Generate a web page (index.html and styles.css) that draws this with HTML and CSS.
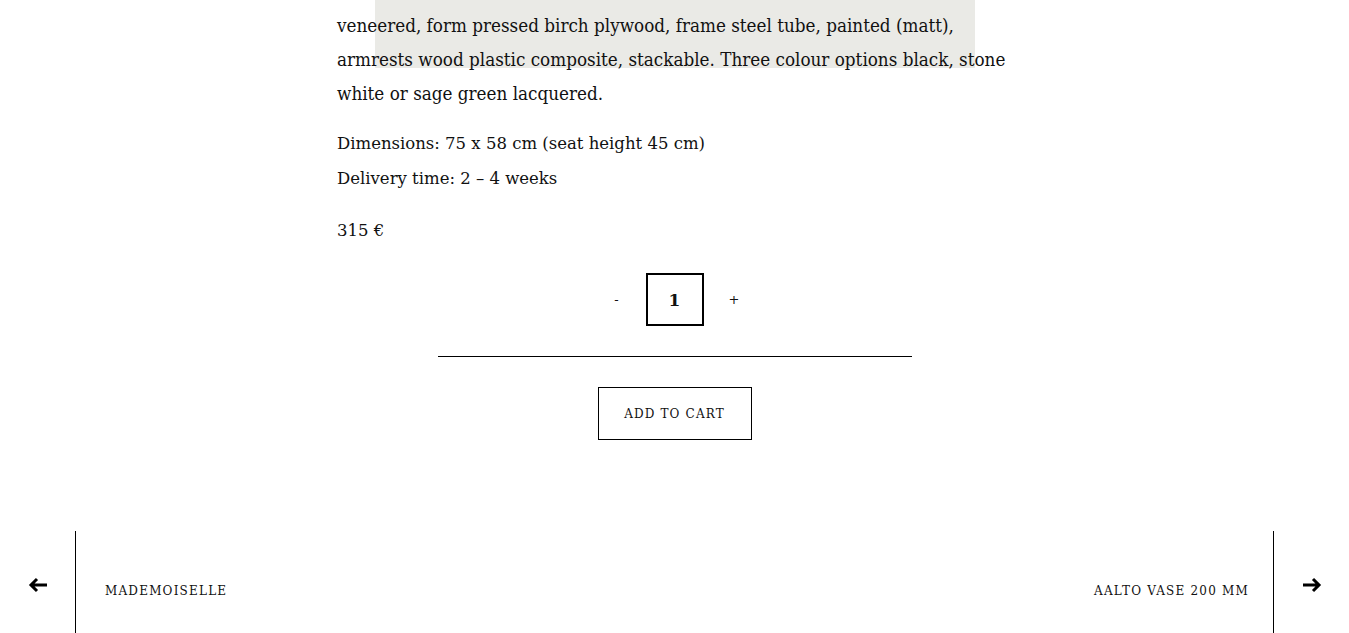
FILE: index.html
```html
<!DOCTYPE html>
<html lang="en">
<head>
<meta charset="utf-8">
<title>Product</title>
<link rel="stylesheet" href="styles.css">
</head>
<body>
<main class="product">
  <div class="media-edge"></div>
  <div class="description">
    <p class="lead">veneered, form pressed birch plywood, frame steel tube, painted (matt), armrests wood plastic composite, stackable. Three colour options black, stone white or sage green lacquered.</p>
    <p class="meta">Dimensions: 75 x 58 cm (seat height 45 cm)<br>Delivery time: 2 – 4 weeks</p>
    <p class="price">315 €</p>
  </div>
  <form class="cart">
    <div class="qty">
      <button type="button" class="qty-btn">-</button>
      <span class="qty-val">1</span>
      <button type="button" class="qty-btn">+</button>
    </div>
    <hr class="rule">
    <button type="button" class="add">ADD TO CART</button>
  </form>
</main>
<nav class="pager">
  <a class="pager-arrow" href="#" aria-label="Previous">
    <svg width="20" height="16" viewBox="0 0 20 16"><path d="M19 8H3M9 2L3 8l6 6" fill="none" stroke="#000" stroke-width="3"/></svg>
  </a>
  <a class="pager-link prev" href="#">MADEMOISELLE</a>
  <a class="pager-link next" href="#">AALTO VASE 200 MM</a>
  <a class="pager-arrow" href="#" aria-label="Next">
    <svg width="20" height="16" viewBox="0 0 20 16"><path d="M1 8h16M11 2l6 6-6 6" fill="none" stroke="#000" stroke-width="3"/></svg>
  </a>
</nav>
</body>
</html>
```

FILE: styles.css
```css
html, body {
  margin: 0;
  padding: 0;
  background: #fff;
  color: #111;
  font-family: "DejaVu Serif", "Liberation Serif", serif;
}
.product {
  position: relative;
  width: 675px;
  margin: 0 auto;
}
.media-edge {
  position: absolute;
  left: 38px;
  top: 0;
  width: 600px;
  height: 68px;
  background: #eaeae6;
  z-index: 0;
}
.description {
  position: relative;
  z-index: 1;
}
.lead {
  margin: 0;
  padding-top: 9px;
  font-stretch: condensed;
  line-height: 34px;
  font-size: 18.7px;
}
.meta {
  margin: 15px 0 0;
  line-height: 35px;
  font-size: 16.5px;
}
.price {
  margin: 23px 0 0;
  font-size: 16.5px;
  line-height: 24px;
}
.cart {
  display: flex;
  flex-direction: column;
  align-items: center;
}
.qty {
  display: flex;
  align-items: center;
  gap: 25px;
  margin-top: 30px;
}
.qty-btn {
  border: 0;
  background: none;
  font-family: inherit;
  font-size: 13px;
  color: #111;
  padding: 0;
  width: 8px;
}
.qty-val {
  box-sizing: border-box;
  width: 58px;
  height: 53px;
  border: 2px solid #000;
  display: flex;
  align-items: center;
  justify-content: center;
  font-weight: bold;
  font-size: 17px;
}
.rule {
  width: 474px;
  border: 0;
  border-top: 1px solid #000;
  margin: 30px 0 0;
}
.add {
  margin-top: 30px;
  box-sizing: border-box;
  width: 154px;
  height: 53px;
  border: 1px solid #000;
  background: #fff;
  font-family: inherit;
  font-size: 12px;
  letter-spacing: 1.15px;
  color: #111;
}
.pager {
  display: flex;
  align-items: center;
  margin-top: 91px;
  height: 108px;
}
.pager-arrow {
  width: 75px;
  display: flex;
  justify-content: center;
  align-items: center;
  align-self: stretch;
}
.pager-arrow:first-child { border-right: 1px solid #000; }
.pager-arrow:last-child { border-left: 1px solid #000; }
.pager-link {
  flex: 1;
  color: #111;
  text-decoration: none;
  font-size: 12px;
  letter-spacing: 1.2px;
  padding-top: 11px;
}
.prev { padding-left: 29px; }
.next { text-align: right; padding-right: 24px; }
```
